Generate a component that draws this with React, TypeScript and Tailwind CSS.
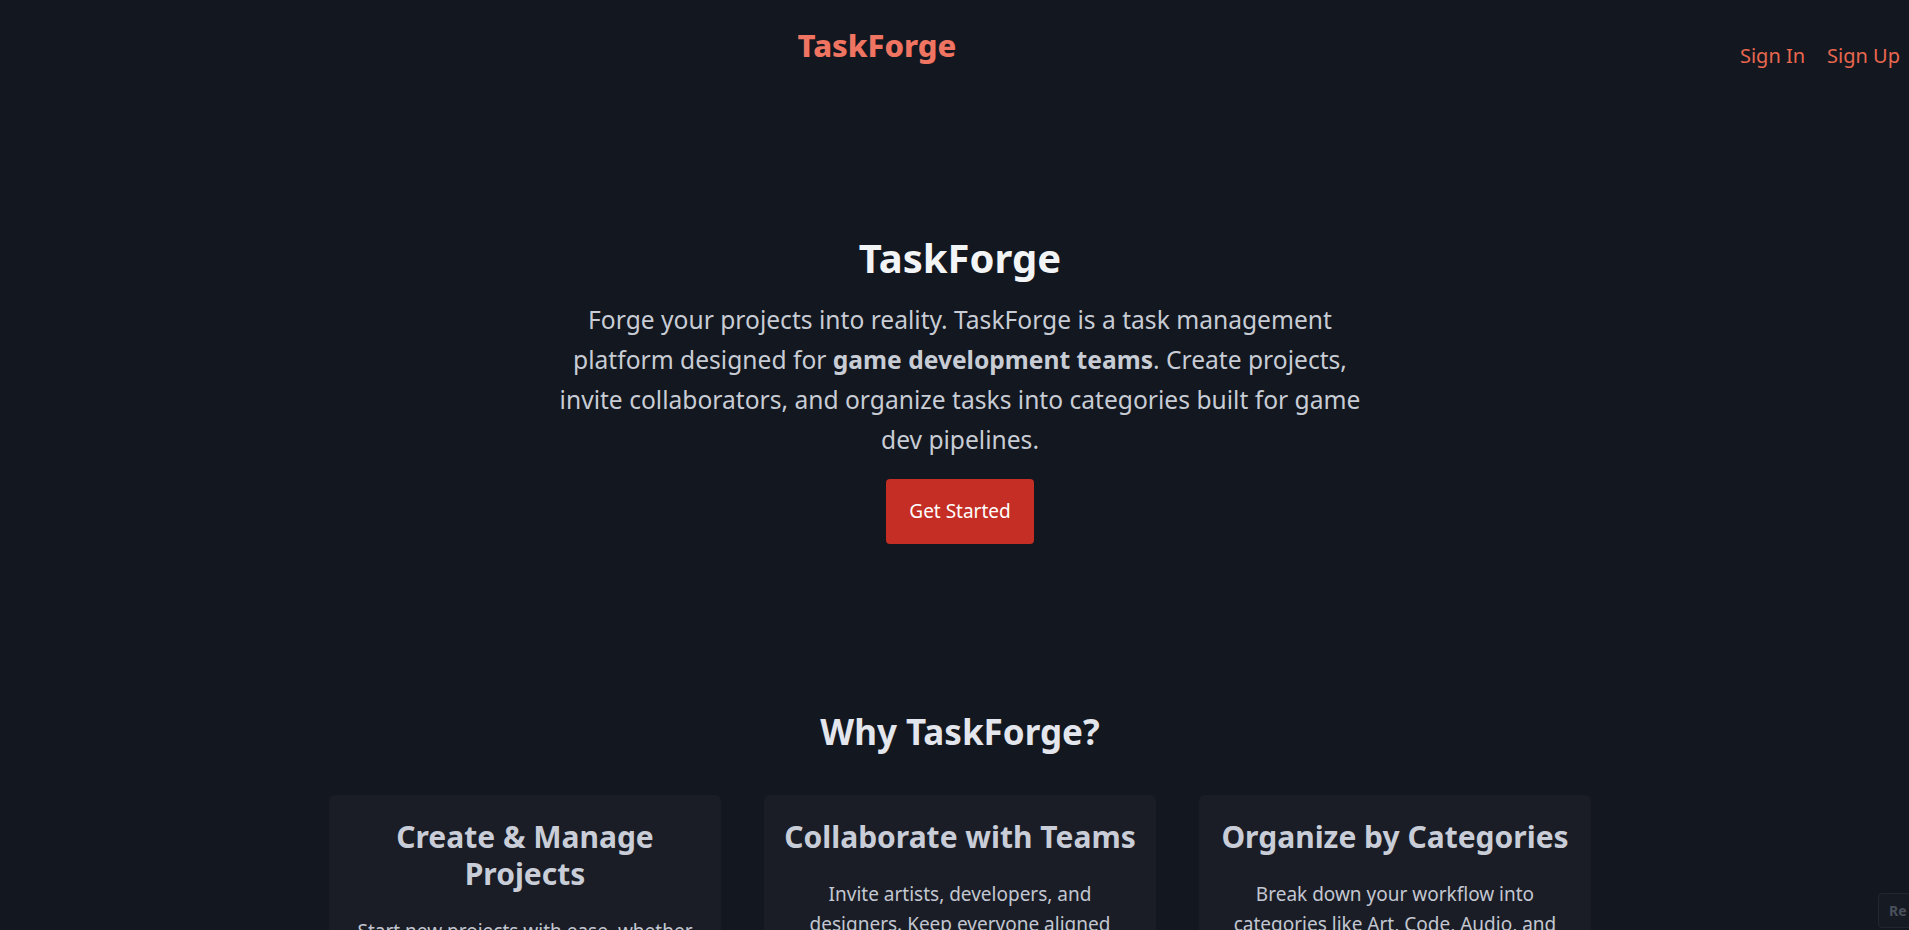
const features = [
  {
    title: "Create & Manage Projects",
    body: "Start new projects with ease, whether you're prototyping a jam game or shipping a full release.",
  },
  {
    title: "Collaborate with Teams",
    body: "Invite artists, developers, and designers. Keep everyone aligned throughout production.",
  },
  {
    title: "Organize by Categories",
    body: "Break down your workflow into categories like Art, Code, Audio, and Design.",
  },
];

function Header() {
  return (
    <header className="flex items-start">
      <div className="flex flex-1 justify-center pl-[14px] pt-[27px]">
        <span className="text-[31px] font-extrabold leading-[36px] text-[#ef7461]">
          TaskForge
        </span>
      </div>
      <nav className="flex gap-[22px] pr-[20px] pt-[41px] text-[20px] leading-[30px] text-[#e8674f]">
        <a href="#">Sign In</a>
        <a href="#">Sign Up</a>
      </nav>
    </header>
  );
}

function Hero() {
  return (
    <section className="flex flex-col items-center pt-[163px] text-center">
      <h1 className="text-[40px] font-bold leading-[48px] text-[#f3f4f6]">
        TaskForge
      </h1>
      <p className="mt-[18px] max-w-[815px] text-[24.6px] leading-[40px] text-[#c8ccd5]">
        Forge your projects into reality. TaskForge is a task management
        platform designed for <strong>game development teams</strong>. Create
        projects, invite collaborators, and organize tasks into categories
        built for game dev pipelines.
      </p>
      <button className="mt-[19px] h-[65px] w-[148px] rounded bg-[#c52e24] text-[19px] text-white">
        Get Started
      </button>
    </section>
  );
}

function Features() {
  return (
    <section className="flex flex-col items-center pt-[166px]">
      <h2 className="text-[35px] font-bold leading-[44px] text-[#e3e6ec]">
        Why TaskForge?
      </h2>
      <div className="mt-[41px] grid w-[1262px] grid-cols-3 gap-[43px]">
        {features.map((f) => (
          <div
            key={f.title}
            className="rounded-md bg-[#1a1d26] px-[20px] pt-[23px] pb-8 text-center"
          >
            <h3 className="text-[30px] font-bold leading-[37px] text-[#c9cdd7]">
              {f.title}
            </h3>
            <p className="mt-[24px] text-[19px] leading-[30px] text-[#c3c7d1]">
              {f.body}
            </p>
          </div>
        ))}
      </div>
    </section>
  );
}

export default function App() {
  return (
    <div
      className="h-screen w-full overflow-hidden bg-[#13171f]"
      style={{ fontFamily: '"Segoe UI", "Noto Sans", sans-serif' }}
    >
      <div className="w-[1920px]">
        <Header />
        <Hero />
        <Features />
      </div>

      <div className="fixed right-0 top-[893px] h-[40px] w-[31px] overflow-hidden">
        <div className="w-[90px] rounded border border-[#22262f] bg-[#161a22] px-[10px] py-[6px] text-[14px] font-bold text-[#4a4f5c]">
          Re
        </div>
      </div>
    </div>
  );
}
